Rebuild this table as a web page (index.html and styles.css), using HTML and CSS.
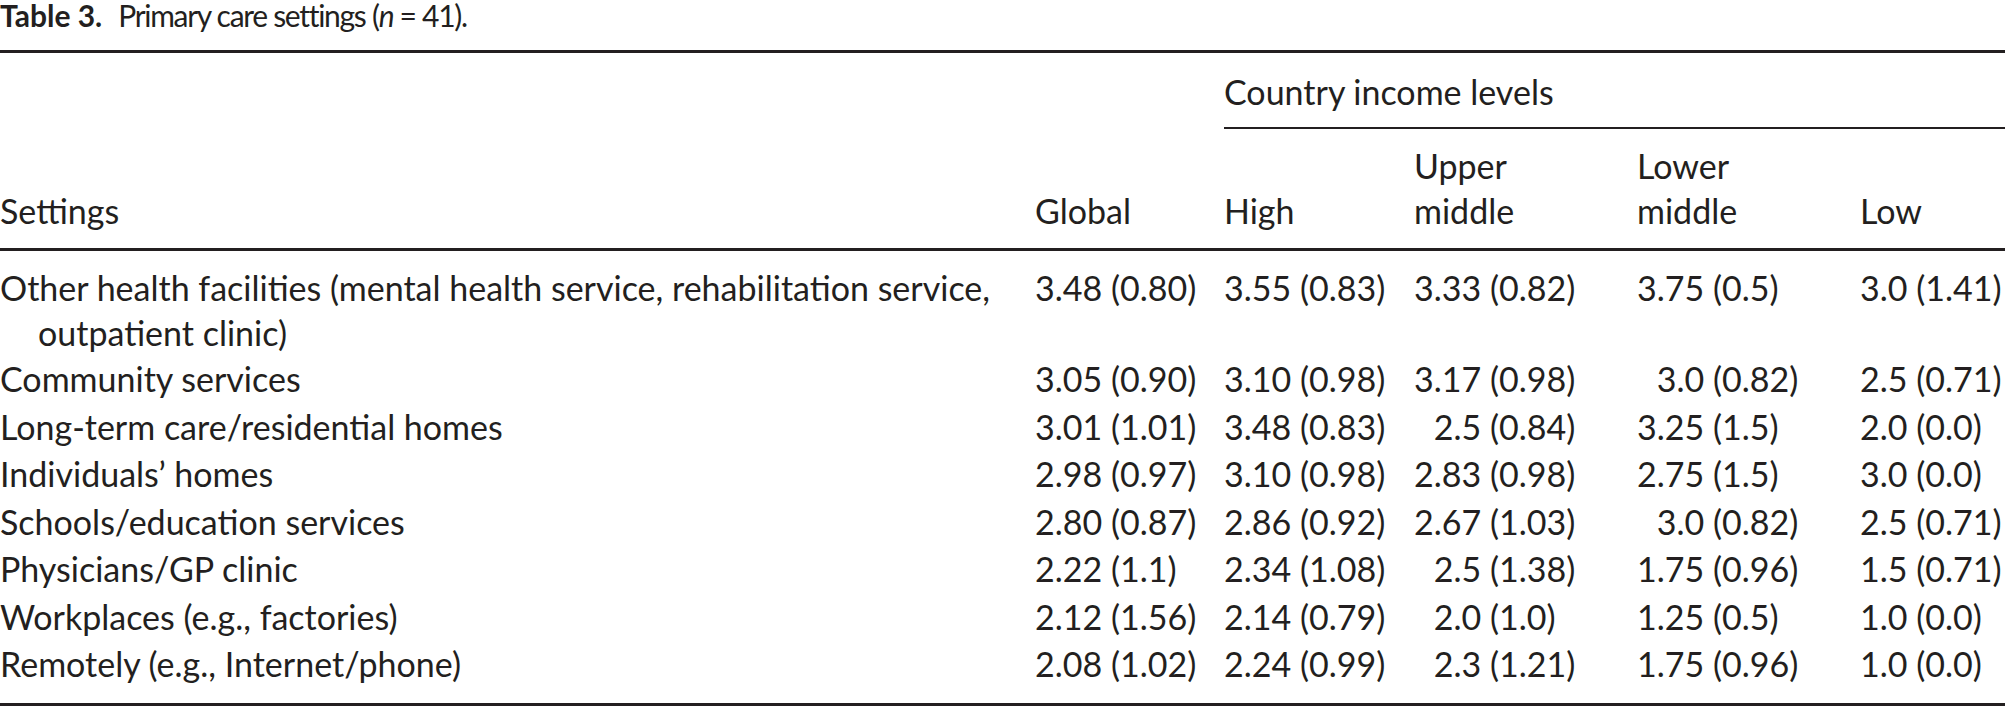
FILE: index.html
```html
<!DOCTYPE html>
<html lang="en">
<head>
<meta charset="utf-8">
<title>Table 3. Primary care settings</title>
<link rel="stylesheet" href="styles.css">
</head>
<body>
<div class="caption"><b class="label">Table 3.</b><span class="cap-text">Primary care settings (<i>n</i> = 41).</span></div>
<table class="tbl">
  <colgroup>
    <col class="c-set">
    <col class="c-glob">
    <col class="c-high">
    <col class="c-up">
    <col class="c-low-mid">
    <col class="c-low">
  </colgroup>
  <thead>
    <tr class="h1">
      <th rowspan="2" class="bottom">Settings</th>
      <th rowspan="2" class="bottom">Global</th>
      <th colspan="4" class="spanner">Country income levels</th>
    </tr>
    <tr class="h2">
      <th class="bottom">High</th>
      <th class="bottom">Upper<br>middle</th>
      <th class="bottom">Lower<br>middle</th>
      <th class="bottom">Low</th>
    </tr>
  </thead>
  <tbody>
    <tr class="first">
      <td class="set"><span class="hang">Other health facilities (mental health service, rehabilitation service,<br>outpatient clinic)</span></td>
      <td>3.48 (0.80)</td><td>3.55 (0.83)</td><td>3.33 (0.82)</td><td>3.75 (0.5)</td><td>3.0 (1.41)</td>
    </tr>
    <tr>
      <td class="set">Community services</td>
      <td>3.05 (0.90)</td><td>3.10 (0.98)</td><td>3.17 (0.98)</td><td><span class="pad">3.0</span> (0.82)</td><td>2.5 (0.71)</td>
    </tr>
    <tr>
      <td class="set">Long-term care/residential homes</td>
      <td>3.01 (1.01)</td><td>3.48 (0.83)</td><td><span class="pad">2.5</span> (0.84)</td><td>3.25 (1.5)</td><td>2.0 (0.0)</td>
    </tr>
    <tr>
      <td class="set">Individuals’ homes</td>
      <td>2.98 (0.97)</td><td>3.10 (0.98)</td><td>2.83 (0.98)</td><td>2.75 (1.5)</td><td>3.0 (0.0)</td>
    </tr>
    <tr>
      <td class="set">Schools/education services</td>
      <td>2.80 (0.87)</td><td>2.86 (0.92)</td><td>2.67 (1.03)</td><td><span class="pad">3.0</span> (0.82)</td><td>2.5 (0.71)</td>
    </tr>
    <tr>
      <td class="set">Physicians/GP clinic</td>
      <td>2.22 (1.1)</td><td>2.34 (1.08)</td><td><span class="pad">2.5</span> (1.38)</td><td>1.75 (0.96)</td><td>1.5 (0.71)</td>
    </tr>
    <tr>
      <td class="set">Workplaces (e.g., factories)</td>
      <td>2.12 (1.56)</td><td>2.14 (0.79)</td><td><span class="pad">2.0</span> (1.0)</td><td>1.25 (0.5)</td><td>1.0 (0.0)</td>
    </tr>
    <tr class="last">
      <td class="set">Remotely (e.g., Internet/phone)</td>
      <td>2.08 (1.02)</td><td>2.24 (0.99)</td><td><span class="pad">2.3</span> (1.21)</td><td>1.75 (0.96)</td><td>1.0 (0.0)</td>
    </tr>
  </tbody>
</table>
</body>
</html>
```

FILE: styles.css
```css
html, body {
  margin: 0;
  padding: 0;
  background: #ffffff;
}

body {
  font-family: "Lato", "Open Sans", sans-serif;
  color: #231f20;
  width: 2005px;
  font-variant-numeric: tabular-nums lining-nums;
}

.caption {
  font-size: 30px;
  line-height: 30px;
  height: 30px;
  margin-bottom: 20px;
  white-space: nowrap;
}

.caption .label {
  font-weight: 700;
  margin-right: 16px;
}

.caption .cap-text {
  font-size: 30px;
  letter-spacing: -1.3px;
}

.tbl {
  width: 2005px;
  table-layout: fixed;
  border-collapse: collapse;
  border-top: 3px solid #231f20;
  border-bottom: 3px solid #231f20;
  font-size: 34px;
}

.c-set { width: 1035px; }
.c-glob { width: 189px; }
.c-high { width: 190px; }
.c-up { width: 223px; }
.c-low-mid { width: 223px; }
.c-low { width: 145px; }

.tbl th,
.tbl td {
  padding: 0;
  text-align: left;
  font-weight: 400;
  white-space: nowrap;
  vertical-align: top;
}

.tbl thead {
  line-height: 45px;
}

.h1 .spanner {
  padding-top: 16px;
  padding-bottom: 13px;
  border-bottom: 2px solid #231f20;
}

.h2 th {
  padding-top: 14px;
}

.tbl th.bottom {
  vertical-align: bottom;
  padding-bottom: 15px;
}

.tbl thead tr.h2 {
  border-bottom: 3px solid #231f20;
}

.tbl tbody td {
  line-height: 47.5px;
}

.tbl tbody tr.first td {
  padding-top: 14px;
  line-height: 45px;
}

.tbl tbody tr.last td {
  padding-bottom: 15px;
}

.hang {
  display: block;
  padding-left: 38px;
  text-indent: -38px;
}

.pad {
  padding-left: 1ch;
}
```
